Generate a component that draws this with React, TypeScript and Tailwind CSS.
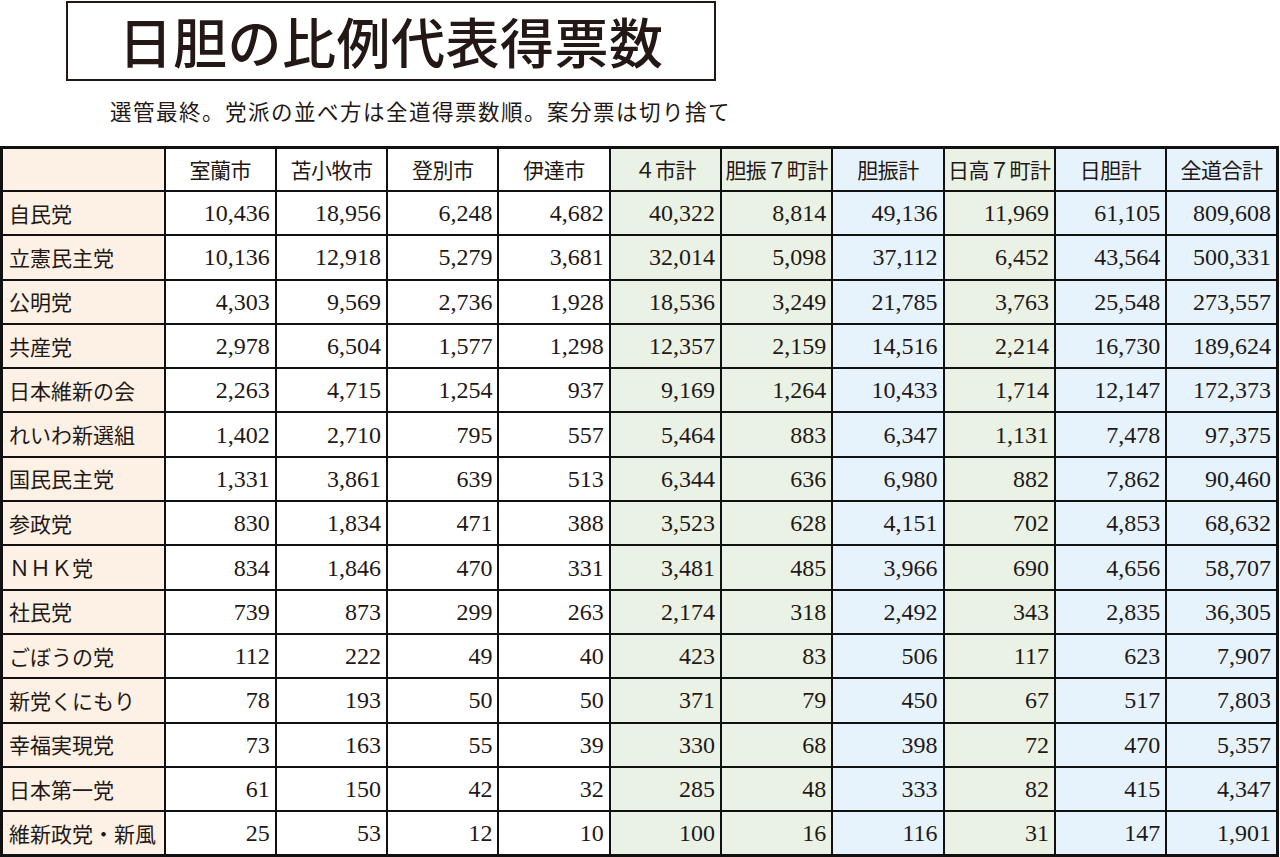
import React from "react";

type Row = { party: string; values: string[] };

const headers = ["室蘭市", "苫小牧市", "登別市", "伊達市", "４市計", "胆振７町計", "胆振計", "日高７町計", "日胆計", "全道合計"];

// column tint: w = white, g = green subtotal, b = blue total
const tints = ["w", "w", "w", "w", "g", "g", "b", "g", "b", "b"];

const rows: Row[] = [
  { party: "自民党", values: ["10,436", "18,956", "6,248", "4,682", "40,322", "8,814", "49,136", "11,969", "61,105", "809,608"] },
  { party: "立憲民主党", values: ["10,136", "12,918", "5,279", "3,681", "32,014", "5,098", "37,112", "6,452", "43,564", "500,331"] },
  { party: "公明党", values: ["4,303", "9,569", "2,736", "1,928", "18,536", "3,249", "21,785", "3,763", "25,548", "273,557"] },
  { party: "共産党", values: ["2,978", "6,504", "1,577", "1,298", "12,357", "2,159", "14,516", "2,214", "16,730", "189,624"] },
  { party: "日本維新の会", values: ["2,263", "4,715", "1,254", "937", "9,169", "1,264", "10,433", "1,714", "12,147", "172,373"] },
  { party: "れいわ新選組", values: ["1,402", "2,710", "795", "557", "5,464", "883", "6,347", "1,131", "7,478", "97,375"] },
  { party: "国民民主党", values: ["1,331", "3,861", "639", "513", "6,344", "636", "6,980", "882", "7,862", "90,460"] },
  { party: "参政党", values: ["830", "1,834", "471", "388", "3,523", "628", "4,151", "702", "4,853", "68,632"] },
  { party: "ＮＨＫ党", values: ["834", "1,846", "470", "331", "3,481", "485", "3,966", "690", "4,656", "58,707"] },
  { party: "社民党", values: ["739", "873", "299", "263", "2,174", "318", "2,492", "343", "2,835", "36,305"] },
  { party: "ごぼうの党", values: ["112", "222", "49", "40", "423", "83", "506", "117", "623", "7,907"] },
  { party: "新党くにもり", values: ["78", "193", "50", "50", "371", "79", "450", "67", "517", "7,803"] },
  { party: "幸福実現党", values: ["73", "163", "55", "39", "330", "68", "398", "72", "470", "5,357"] },
  { party: "日本第一党", values: ["61", "150", "42", "32", "285", "48", "333", "82", "415", "4,347"] },
  { party: "維新政党・新風", values: ["25", "53", "12", "10", "100", "16", "116", "31", "147", "1,901"] },
];

const tintClass = (t: string) =>
  t === "g" ? "bg-[#eaf2e5]" : t === "b" ? "bg-[#e6f3fc]" : "bg-white";

const jp = "font-['Noto_Sans_CJK_JP',sans-serif]";

export default function App() {
  return (
    <div className={`w-[1280px] h-[857px] bg-white text-[#231815] overflow-hidden ${jp}`}>
      <div className="pl-[66px] pt-[1px]">
        <div className="w-[650px] h-[80px] border-2 border-[#231815] flex items-center justify-center">
          <h1 className="text-[54px] font-medium leading-none tracking-[0.5px]">日胆の比例代表得票数</h1>
        </div>
      </div>
      <p className="pl-[110px] mt-[19px] text-[21.5px] leading-none tracking-[1.5px]">
        選管最終。党派の並べ方は全道得票数順。案分票は切り捨て
      </p>

      <table className="mt-[24px] w-[1279px] table-fixed border-collapse border-[3px] border-[#111]">
        <colgroup>
          <col className="w-[163px]" />
          {headers.map((h) => (
            <col key={h} />
          ))}
        </colgroup>
        <thead>
          <tr className="h-[44px]">
            <th className="bg-[#fdf1e5] border-2 border-[#111]" />
            {headers.map((h, i) => (
              <th
                key={h}
                className={`${tintClass(tints[i])} border-2 border-[#111] text-[21px] font-normal leading-none whitespace-nowrap tracking-[-0.5px]`}
              >
                {h}
              </th>
            ))}
          </tr>
        </thead>
        <tbody>
          {rows.map((r) => (
            <tr key={r.party} className="h-[44.3px]">
              <td className="bg-[#fdf1e5] border-2 border-[#111] pl-[6px] text-[21px] leading-none whitespace-nowrap">
                {r.party}
              </td>
              {r.values.map((v, i) => (
                <td
                  key={i}
                  className={`${tintClass(tints[i])} border-2 border-[#111] pr-[5px] text-right text-[24px] leading-none font-['Liberation_Serif',serif]`}
                >
                  {v}
                </td>
              ))}
            </tr>
          ))}
        </tbody>
      </table>
    </div>
  );
}
